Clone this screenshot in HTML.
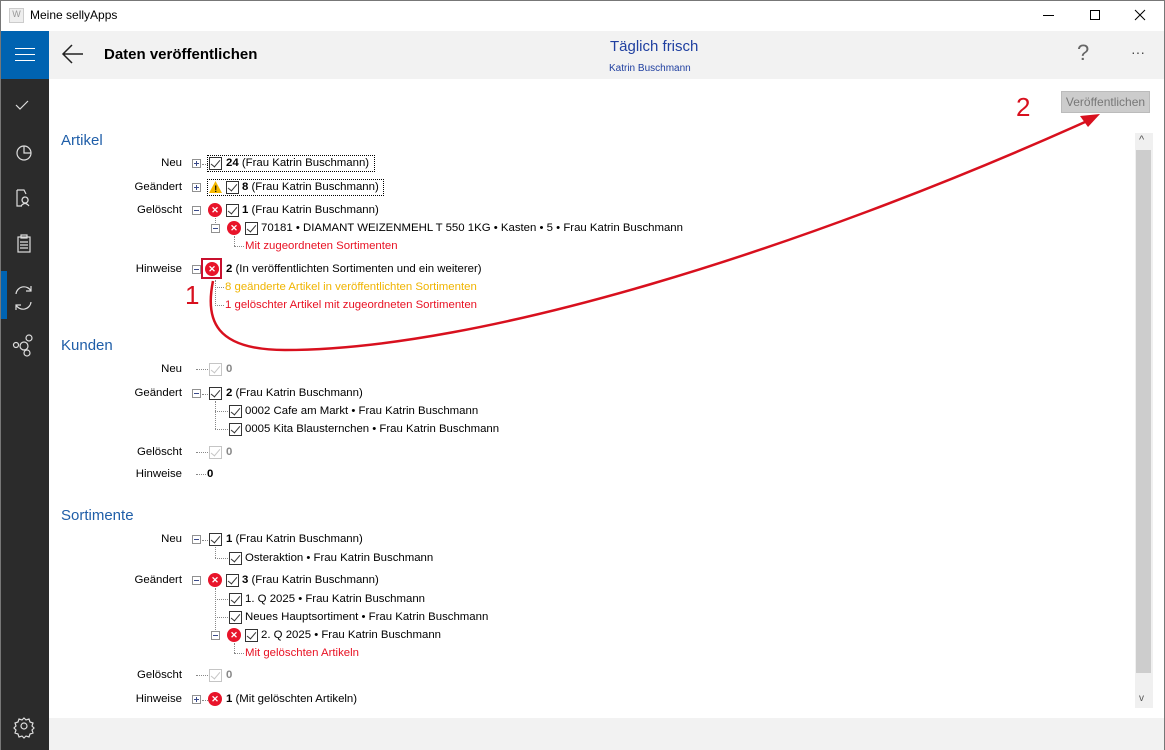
<!DOCTYPE html>
<html><head><meta charset="utf-8">
<style>
*{margin:0;padding:0;box-sizing:border-box}
body{width:1165px;height:750px;position:relative;overflow:hidden;background:#fff;font-family:"Liberation Sans",sans-serif;font-size:11.4px;color:#000}
.a{position:absolute;white-space:nowrap}
.lbl{position:absolute;width:120px;text-align:right;left:62px;line-height:14px}
.t{position:absolute;line-height:14px;white-space:nowrap}
.exp{position:absolute;width:9px;height:9px;border:1px solid #919191;background:#fff}
.exp:before{content:"";position:absolute;left:1px;top:3px;width:5px;height:1px;background:#3a4a8a}
.exp.p:after{content:"";position:absolute;left:3px;top:1px;width:1px;height:5px;background:#3a4a8a}
.cb{position:absolute;width:13px;height:13px;border:1px solid #333;background:#fff}
.cb:after{content:"";position:absolute;left:3px;top:0px;width:4px;height:8px;border-right:1.5px solid #333;border-bottom:1.5px solid #333;transform:rotate(40deg)}
.cb.g{border-color:#c5c5c5}.cb.g:after{border-color:#c5c5c5}
.x{position:absolute;width:14px;height:14px;border-radius:50%;background:#e8142a;color:#fff;font-size:9px;line-height:14px;text-align:center;font-weight:bold}
.hd{position:absolute;left:61px;font-size:15px;color:#1f5ea8}
.dh{position:absolute;border-top:1px dotted #888;height:0}
.dv{position:absolute;border-left:1px dotted #888;width:0}
.red{color:#e81123}.yel{color:#f0b400}
b{font-weight:bold}
</style></head><body>
<div class="a" style="left:0;top:0;width:1165px;height:31px;background:#fff;border-top:1px solid #777;border-left:1px solid #777;border-right:1px solid #777"></div>
<div class="a" style="left:9px;top:8px;width:15px;height:15px;background:#eee;border:1px solid #ccc;font-size:9px;color:#999;text-align:center">W</div>
<div class="a" style="left:30px;top:8px;font-size:12px">Meine sellyApps</div>
<svg class="a" style="left:1030px;top:0" width="130" height="31" fill="none" stroke="#000" stroke-width="1"><path d="M13 15.5 h11"/><rect x="60.5" y="10.5" width="9" height="9"/><path d="M105 10 l10 10 M115 10 l-10 10"/></svg>
<div class="a" style="left:0;top:31px;width:49px;height:719px;background:#2b2b2b;border-left:1px solid #777"></div>
<div class="a" style="left:1px;top:31px;width:48px;height:48px;background:#0063b1"></div>
<div class="a" style="left:15px;top:48px;width:20px;height:1px;background:#fff;box-shadow:0 6px 0 #fff,0 12px 0 #fff"></div>
<div class="a" style="left:1px;top:271px;width:6px;height:48px;background:#0063b1"></div>
<svg class="a" style="left:0;top:80px" width="49" height="670" fill="none" stroke="#ddd" stroke-width="1.2">
<path d="M16 25 l4 4 l8 -8"/>
<circle cx="24" cy="73" r="7"/><path d="M24 66 v7 h7"/>
<path d="M17 110 v16 h5 M17 110 h7 l2 4 M25 117 a3 3 0 1 0 0.1 0 M21 126 q4 -5 8 0"/>
<rect x="18" y="157" width="12" height="15"/><rect x="21" y="155" width="6" height="3"/><path d="M20 162 h8 M20 165 h8 M20 168 h8"/>
<path d="M16 214 a8 8 0 0 1 15 -3 M31 222 a8 8 0 0 1 -15 3 M31 206 v5 h-5 M16 230 v-5 h5"/>
<circle cx="16" cy="265" r="2.5"/><circle cx="24" cy="266" r="4"/><circle cx="29" cy="258" r="3"/><circle cx="27" cy="273" r="3"/>
<circle cx="24" cy="646" r="3"/><path d="M24 638 l2 2 l3 -1 l1 3 l3 1 l-1 3 l2 2 l-2 2 l1 3 l-3 1 l-1 3 l-3 -1 l-2 2 l-2 -2 l-3 1 l-1 -3 l-3 -1 l1 -3 l-2 -2 l2 -2 l-1 -3 l3 -1 l1 -3 l3 1 z"/>
</svg>
<div class="a" style="left:49px;top:31px;width:1115px;height:48px;background:#f2f2f2"></div>
<svg class="a" style="left:60px;top:42px" width="26" height="24" fill="none" stroke="#222" stroke-width="1.5"><path d="M3 12 h20 M12 3 l-9 9 l9 9"/></svg>
<div class="a" style="left:104px;top:46px;font-size:15px;font-weight:bold">Daten veröffentlichen</div>
<div class="a" style="left:610px;top:38px;font-size:15px;color:#1f3fa0">Täglich frisch</div>
<div class="a" style="left:609px;top:63px;font-size:10px;color:#1f3fa0">Katrin Buschmann</div>
<div class="a" style="left:1077px;top:40px;font-size:22px;color:#666">?</div>
<div class="a" style="left:1131px;top:44px;font-size:14px;color:#444">···</div>
<div class="a" style="left:49px;top:718px;width:1115px;height:32px;background:#f2f2f2"></div>
<div class="a" style="left:1164px;top:0;width:1px;height:750px;background:#777"></div>
<div class="a" style="left:1061px;top:91px;width:89px;height:22px;background:#ccc;border:1px solid #bbb;color:#777;text-align:center;line-height:20px;font-size:12px">Veröffentlichen</div>
<div class="a" style="left:1135px;top:133px;width:18px;height:575px;background:#f0f0f0"></div>
<div class="a" style="left:1136px;top:150px;width:15px;height:523px;background:#cdcdcd"></div>
<div class="a" style="left:1139px;top:134px;font-size:11px;color:#555">^</div>
<div class="a" style="left:1139px;top:693px;font-size:10px;color:#555">v</div>

<div class="hd" style="top:132px">Artikel</div>
<div class="lbl" style="top:156px">Neu</div>
<div class="exp p" style="left:192px;top:159px"></div><div class="dh" style="left:202px;top:164px;width:6px"></div>
<div class="a" style="left:207px;top:155px;width:168px;height:17px;border:1px dotted #000"></div>
<div class="cb" style="left:209px;top:157px"></div><div class="t" style="left:226px;top:156px"><b>24</b> (Frau Katrin Buschmann)</div>
<div class="lbl" style="top:180px">Geändert</div>
<div class="exp p" style="left:192px;top:183px"></div>
<div class="a" style="left:207px;top:179px;width:177px;height:17px;border:1px dotted #000"></div>
<svg class="a" style="left:208px;top:180px" width="15" height="14"><path d="M7.5 1 L14 13 H1 Z" fill="#f5b800"/><text x="6.3" y="12" font-size="9" font-weight="bold" font-family="Liberation Sans">!</text></svg>
<div class="cb" style="left:226px;top:181px"></div><div class="t" style="left:242px;top:180px"><b>8</b> (Frau Katrin Buschmann)</div>
<div class="lbl" style="top:203px">Gelöscht</div>
<div class="exp" style="left:192px;top:206px"></div>
<div class="x" style="left:208px;top:203px">✕</div>
<div class="cb" style="left:226px;top:204px"></div><div class="t" style="left:242px;top:203px"><b>1</b> (Frau Katrin Buschmann)</div>
<div class="dv" style="left:215px;top:218px;height:7px"></div>
<div class="exp" style="left:211px;top:224px"></div>
<div class="x" style="left:227px;top:221px">✕</div>
<div class="cb" style="left:245px;top:222px"></div><div class="t" style="left:261px;top:221px">70181 • DIAMANT WEIZENMEHL T 550 1KG • Kasten • 5 • Frau Katrin Buschmann</div>
<div class="dv" style="left:234px;top:236px;height:10px"></div><div class="dh" style="left:234px;top:246px;width:10px"></div>
<div class="t red" style="left:245px;top:239px">Mit zugeordneten Sortimenten</div>
<div class="lbl" style="top:262px">Hinweise</div>
<div class="exp" style="left:192px;top:265px"></div>
<div class="a" style="left:201px;top:258px;width:21px;height:21px;border:2px solid #c8102e"></div>
<div class="x" style="left:205px;top:262px">✕</div>
<div class="t" style="left:226px;top:262px"><b>2</b> (In veröffentlichten Sortimenten und ein weiterer)</div>
<div class="dv" style="left:215px;top:280px;height:26px"></div>
<div class="dh" style="left:215px;top:287px;width:9px"></div><div class="dh" style="left:215px;top:305px;width:9px"></div>
<div class="t yel" style="left:225px;top:280px">8 geänderte Artikel in veröffentlichten Sortimenten</div>
<div class="t red" style="left:225px;top:298px">1 gelöschter Artikel mit zugeordneten Sortimenten</div>

<div class="hd" style="top:337px">Kunden</div>
<div class="lbl" style="top:362px">Neu</div>
<div class="dh" style="left:196px;top:369px;width:12px"></div>
<div class="cb g" style="left:209px;top:363px"></div><div class="t" style="left:226px;top:362px;color:#888"><b>0</b></div>
<div class="lbl" style="top:386px">Geändert</div>
<div class="exp" style="left:192px;top:389px"></div><div class="dh" style="left:202px;top:394px;width:6px"></div>
<div class="cb" style="left:209px;top:387px"></div><div class="t" style="left:226px;top:386px"><b>2</b> (Frau Katrin Buschmann)</div>
<div class="dv" style="left:215px;top:401px;height:28px"></div>
<div class="dh" style="left:215px;top:411px;width:13px"></div><div class="dh" style="left:215px;top:429px;width:13px"></div>
<div class="cb" style="left:229px;top:405px"></div><div class="t" style="left:245px;top:404px">0002 Cafe am Markt • Frau Katrin Buschmann</div>
<div class="cb" style="left:229px;top:423px"></div><div class="t" style="left:245px;top:422px">0005 Kita Blausternchen • Frau Katrin Buschmann</div>
<div class="lbl" style="top:445px">Gelöscht</div>
<div class="dh" style="left:196px;top:452px;width:12px"></div>
<div class="cb g" style="left:209px;top:446px"></div><div class="t" style="left:226px;top:445px;color:#888"><b>0</b></div>
<div class="lbl" style="top:467px">Hinweise</div>
<div class="dh" style="left:196px;top:474px;width:10px"></div>
<div class="t" style="left:207px;top:467px"><b>0</b></div>

<div class="hd" style="top:507px">Sortimente</div>
<div class="lbl" style="top:532px">Neu</div>
<div class="exp" style="left:192px;top:535px"></div><div class="dh" style="left:202px;top:540px;width:6px"></div>
<div class="cb" style="left:209px;top:533px"></div><div class="t" style="left:226px;top:532px"><b>1</b> (Frau Katrin Buschmann)</div>
<div class="dv" style="left:215px;top:547px;height:11px"></div><div class="dh" style="left:215px;top:558px;width:13px"></div>
<div class="cb" style="left:229px;top:552px"></div><div class="t" style="left:245px;top:551px">Osteraktion • Frau Katrin Buschmann</div>
<div class="lbl" style="top:573px">Geändert</div>
<div class="exp" style="left:192px;top:576px"></div>
<div class="x" style="left:208px;top:573px">✕</div>
<div class="cb" style="left:226px;top:574px"></div><div class="t" style="left:242px;top:573px"><b>3</b> (Frau Katrin Buschmann)</div>
<div class="dv" style="left:215px;top:588px;height:44px"></div>
<div class="dh" style="left:215px;top:599px;width:13px"></div><div class="dh" style="left:215px;top:617px;width:13px"></div>
<div class="cb" style="left:229px;top:593px"></div><div class="t" style="left:245px;top:592px">1. Q 2025 • Frau Katrin Buschmann</div>
<div class="cb" style="left:229px;top:611px"></div><div class="t" style="left:245px;top:610px">Neues Hauptsortiment • Frau Katrin Buschmann</div>
<div class="exp" style="left:211px;top:631px"></div>
<div class="x" style="left:227px;top:628px">✕</div>
<div class="cb" style="left:245px;top:629px"></div><div class="t" style="left:261px;top:628px">2. Q 2025 • Frau Katrin Buschmann</div>
<div class="dv" style="left:234px;top:643px;height:10px"></div><div class="dh" style="left:234px;top:653px;width:10px"></div>
<div class="t red" style="left:245px;top:646px">Mit gelöschten Artikeln</div>
<div class="lbl" style="top:668px">Gelöscht</div>
<div class="dh" style="left:196px;top:675px;width:12px"></div>
<div class="cb g" style="left:209px;top:669px"></div><div class="t" style="left:226px;top:668px;color:#888"><b>0</b></div>
<div class="lbl" style="top:692px">Hinweise</div>
<div class="exp p" style="left:192px;top:695px"></div><div class="dh" style="left:202px;top:700px;width:6px"></div>
<div class="x" style="left:208px;top:692px">✕</div>
<div class="t" style="left:226px;top:692px"><b>1</b> (Mit gelöschten Artikeln)</div>

<svg class="a" style="left:0;top:0" width="1165" height="750">
<path d="M213 281 C205 320 215 350 285 350 C480 350 800 250 1085 122" fill="none" stroke="#d8101e" stroke-width="2.5"/>
<path d="M1100 114 L1080 116 L1088 127 Z" fill="#d8101e"/>
<text x="185" y="304" font-size="26" fill="#d8101e" font-family="Liberation Sans">1</text>
<text x="1016" y="116" font-size="26" fill="#d8101e" font-family="Liberation Sans">2</text>
</svg>
</body></html>
